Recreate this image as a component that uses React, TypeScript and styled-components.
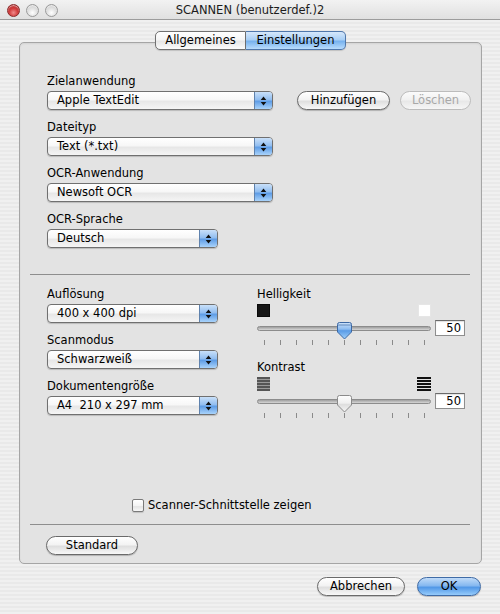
import React from "react";
import styled, { createGlobalStyle } from "styled-components";

const GlobalStyle = createGlobalStyle`
  html, body { margin: 0; padding: 0; }
  body {
    font-family: "DejaVu Sans", "Liberation Sans", sans-serif;
    font-size: 11.5px;
    color: #000;
  }
  * { box-sizing: border-box; }
`;

const Window = styled.div`
  width: 500px;
  height: 614px;
  overflow: hidden;
  display: flex;
  flex-direction: column;
  background: repeating-linear-gradient(
    to bottom,
    #f0f0f0 0px,
    #f0f0f0 2px,
    #e9e9e9 2px,
    #e9e9e9 4px
  );
`;

const TitleBar = styled.div`
  height: 20px;
  display: grid;
  grid-template-columns: 1fr auto 1fr;
  align-items: center;
  border-bottom: 1px solid #9c9c9c;
  background: linear-gradient(#f2f2f2, #e0e0e0);
`;

const Lights = styled.div`
  display: flex;
  gap: 6px;
  padding-left: 7px;
  padding-top: 2px;
`;

const Light = styled.span<{ $red?: boolean }>`
  width: 13px;
  height: 13px;
  border-radius: 50%;
  border: 1px solid ${(p) => (p.$red ? "#8a2a2a" : "#9a9a9a")};
  background: ${(p) =>
    p.$red
      ? "radial-gradient(circle at 50% 70%, #f08a8a 0%, #d23c3c 45%, #a52222 100%)"
      : "radial-gradient(circle at 50% 70%, #ffffff 0%, #e2e2e2 45%, #c4c4c4 100%)"};
  box-shadow: inset 0 1px 1px rgba(255, 255, 255, 0.6);
`;

const Title = styled.div`
  font-size: 11.5px;
  color: #1c1c1c;
  padding-top: 1px;
  white-space: nowrap;
`;

const Content = styled.div`
  display: flex;
  flex-direction: column;
  padding: 11px 18px 0 19px;
`;

const TabRow = styled.div`
  position: relative;
  z-index: 1;
  display: flex;
  justify-content: center;
  height: 19px;
`;

const Tab = styled.div<{ $active?: boolean; $first?: boolean; $w: number }>`
  width: ${(p) => p.$w}px;
  height: 19px;
  line-height: 17px;
  text-align: center;
  border: 1px solid ${(p) => (p.$active ? "#4f77ab" : "#707070")};
  border-left-width: ${(p) => (p.$first ? "1px" : "0")};
  border-radius: ${(p) => (p.$first ? "5px 0 0 5px" : "0 5px 5px 0")};
  background: ${(p) =>
    p.$active
      ? "linear-gradient(#d6e8fb 0%, #a9cff5 45%, #78b2ee 55%, #b9dcfd 100%)"
      : "linear-gradient(#ffffff 0%, #f5f5f5 45%, #e6e6e6 55%, #fbfbfb 100%)"};
  box-shadow: 0 1px 1px rgba(0, 0, 0, 0.15);
`;

const Panel = styled.div`
  margin-top: -8px;
  height: 522px;
  border: 1px solid #a5a5a5;
  border-radius: 5px;
  background: #e3e3e3;
  box-shadow: inset 0 1px 2px rgba(0, 0, 0, 0.07);
  padding: 31px 0 8px 0;
  display: flex;
  flex-direction: column;
`;

const FieldStack = styled.div`
  display: flex;
  flex-direction: column;
  gap: 10px;
`;

const SectionA = styled(FieldStack)`
  padding-left: 27px;
`;

const Field = styled.div`
  display: flex;
  flex-direction: column;
`;

const Label = styled.div`
  height: 15px;
  line-height: 15px;
  margin-bottom: 2px;
  white-space: nowrap;
`;

const FieldRow = styled.div`
  display: flex;
  align-items: flex-end;
`;

const ButtonGroup = styled.div`
  display: flex;
  gap: 10px;
  margin-left: 24px;
`;

const PopupBox = styled.div<{ $w: number }>`
  width: ${(p) => p.$w}px;
  height: 19px;
  display: flex;
  border: 1px solid #707070;
  border-radius: 4px;
  overflow: hidden;
  background: linear-gradient(#ffffff 0%, #f7f7f7 45%, #e7e7e7 55%, #f5f5f5 100%);
  box-shadow: 0 1px 1px rgba(0, 0, 0, 0.18);
`;

const PopupText = styled.span`
  flex: 1;
  padding-left: 9px;
  line-height: 17px;
  white-space: pre;
`;

const PopupArrows = styled.span`
  width: 18px;
  display: flex;
  align-items: center;
  justify-content: center;
  border-left: 1px solid #5f82ad;
  background: linear-gradient(#c9e0f9 0%, #92bef0 45%, #5f9de6 55%, #a9d3fb 100%);
`;

const PushButton = styled.div<{ $w: number; $disabled?: boolean; $blue?: boolean }>`
  width: ${(p) => p.$w}px;
  height: 19px;
  line-height: 17px;
  text-align: center;
  white-space: nowrap;
  border-radius: 10px;
  border: 1px solid
    ${(p) => (p.$disabled ? "#bcbcbc" : p.$blue ? "#3f6ba6" : "#6a6a6a")};
  color: ${(p) => (p.$disabled ? "#a8a8a8" : "#000")};
  background: ${(p) =>
    p.$blue
      ? "linear-gradient(#c0dbf8 0%, #86b8f0 45%, #5298e7 55%, #95cbfb 100%)"
      : p.$disabled
      ? "linear-gradient(#fbfbfb 0%, #f1f1f1 45%, #e8e8e8 55%, #f6f6f6 100%)"
      : "linear-gradient(#ffffff 0%, #f3f3f3 45%, #dfdfdf 55%, #f8f8f8 100%)"};
  box-shadow: ${(p) => (p.$disabled ? "none" : "0 1px 1px rgba(0, 0, 0, 0.22)")};
`;

const Separator = styled.div<{ $top: number }>`
  height: 1px;
  margin: ${(p) => p.$top}px 11px 0 10px;
  background: #8e8e8e;
`;

const SectionB = styled.div`
  display: flex;
  gap: 39px;
  padding-left: 27px;
  margin-top: 12px;
`;

const SliderColumn = styled.div`
  display: flex;
  flex-direction: column;
  gap: 15px;
`;

const SliderGroup = styled.div`
  display: flex;
  flex-direction: column;
`;

const IconRow = styled.div`
  width: 174px;
  height: 14px;
  display: flex;
  justify-content: space-between;
  align-items: flex-start;
`;

const Square = styled.span<{ $dark?: boolean }>`
  width: 13px;
  height: 13px;
  background: ${(p) => (p.$dark ? "#161616" : "#ffffff")};
  border: 1px solid ${(p) => (p.$dark ? "#0a0a0a" : "#e6e6e6")};
`;

const SliderRow = styled.div`
  display: flex;
  align-items: center;
  height: 16px;
  margin-top: 2px;
`;

const Track = styled.div`
  position: relative;
  width: 174px;
  height: 5px;
  border-radius: 3px;
  border: 1px solid #8c8c8c;
  background: linear-gradient(#9e9e9e, #d6d6d6);
`;

const ThumbSvg = styled.svg<{ $left: number }>`
  position: absolute;
  top: -5px;
  left: ${(p) => p.$left}px;
`;

const ValueBox = styled.div`
  margin-left: 4px;
  width: 30px;
  height: 16px;
  line-height: 14px;
  text-align: right;
  padding-right: 3px;
  background: #fff;
  border: 1px solid #8e8e8e;
  border-top-color: #6a6a6a;
  box-shadow: inset 0 1px 1px rgba(0, 0, 0, 0.12);
`;

const Ticks = styled.div`
  width: 174px;
  height: 5px;
  margin-top: 4px;
  display: flex;
  justify-content: space-between;
  padding: 0 6px 0 7px;
`;

const Tick = styled.span`
  width: 1px;
  height: 5px;
  background: #8a8a8a;
`;

const CheckRow = styled.div`
  margin-top: auto;
  height: 14px;
  display: flex;
  align-items: center;
  padding-left: 112px;
`;

const CheckBox = styled.span`
  width: 12px;
  height: 13px;
  margin-right: 4px;
  border: 1px solid #7a7a7a;
  border-radius: 2px;
  background: linear-gradient(#ffffff 0%, #f4f4f4 50%, #e4e4e4 60%, #f8f8f8 100%);
  box-shadow: 0 1px 1px rgba(0, 0, 0, 0.15);
`;

const StandardRow = styled.div`
  margin-top: 11px;
  padding-left: 26px;
  display: flex;
`;

const Footer = styled.div`
  display: flex;
  justify-content: flex-end;
  gap: 12px;
  margin-top: 13px;
  padding-right: 1px;
`;

const Arrows = () => (
  <svg width="7" height="10" viewBox="0 0 7 10">
    <path d="M3.5 0.5 L6.3 4 H0.7 Z M0.7 6 H6.3 L3.5 9.5 Z" fill="#111" />
  </svg>
);

const Popup = ({ text, w }: { text: string; w: number }) => (
  <PopupBox $w={w}>
    <PopupText>{text}</PopupText>
    <PopupArrows>
      <Arrows />
    </PopupArrows>
  </PopupBox>
);

const Thumb = ({ value, active, id }: { value: number; active: boolean; id: string }) => {
  const left = 7 + (value / 100) * 160 - 7.5 - 1;
  return (
    <ThumbSvg $left={left} width="15" height="18" viewBox="0 0 15 18">
      <defs>
        <linearGradient id={id} x1="0" y1="0" x2="0" y2="1">
          {active ? (
            <>
              <stop offset="0" stopColor="#cfe3fa" />
              <stop offset="0.4" stopColor="#8dbcf0" />
              <stop offset="0.5" stopColor="#5a9be6" />
              <stop offset="1" stopColor="#9fd0fb" />
            </>
          ) : (
            <>
              <stop offset="0" stopColor="#fdfdfd" />
              <stop offset="0.45" stopColor="#f0f0f0" />
              <stop offset="0.55" stopColor="#dedede" />
              <stop offset="1" stopColor="#f6f6f6" />
            </>
          )}
        </linearGradient>
      </defs>
      <path
        d="M2.5 0.5 H12.5 Q14.5 0.5 14.5 2.5 V10 L7.5 17 L0.5 10 V2.5 Q0.5 0.5 2.5 0.5 Z"
        fill={`url(#${id})`}
        stroke={active ? "#3d68a3" : "#8a8a8a"}
        strokeWidth="1"
      />
      {active && <path d="M1 3 H14" stroke="#2f5a94" strokeWidth="1" opacity="0.6" />}
    </ThumbSvg>
  );
};

const GrayStripes = () => (
  <svg width="13" height="14" viewBox="0 0 13 14">
    <rect x="0" y="0" width="13" height="14" fill="#9a9a9a" />
    {[0, 3, 6, 9, 12].map((y) => (
      <rect key={y} x="0" y={y} width="13" height="2" fill="#555" />
    ))}
  </svg>
);

const BlackStripes = () => (
  <svg width="14" height="14" viewBox="0 0 14 14">
    {[0, 3, 6, 9, 12].map((y) => (
      <rect key={y} x="0" y={y} width="14" height="2" fill="#111" />
    ))}
  </svg>
);

const TickMarks = () => (
  <Ticks>
    {Array.from({ length: 11 }).map((_, i) => (
      <Tick key={i} />
    ))}
  </Ticks>
);

const Slider = ({
  label,
  value,
  active,
  id,
  left,
  right,
}: {
  label: string;
  value: number;
  active: boolean;
  id: string;
  left: React.ReactNode;
  right: React.ReactNode;
}) => (
  <SliderGroup>
    <Label>{label}</Label>
    <IconRow>
      {left}
      {right}
    </IconRow>
    <SliderRow>
      <Track>
        <Thumb value={value} active={active} id={id} />
      </Track>
      <ValueBox>{value}</ValueBox>
    </SliderRow>
    <TickMarks />
  </SliderGroup>
);

const upperFields = [
  { label: "Dateityp", value: "Text (*.txt)", w: 226 },
  { label: "OCR-Anwendung", value: "Newsoft OCR", w: 226 },
  { label: "OCR-Sprache", value: "Deutsch", w: 171 },
];

const lowerFields = [
  { label: "Auflösung", value: "400 x 400 dpi" },
  { label: "Scanmodus", value: "Schwarzweiß" },
  { label: "Dokumentengröße", value: "A4  210 x 297 mm" },
];

export default function App() {
  return (
    <>
      <GlobalStyle />
      <Window>
        <TitleBar>
          <Lights>
            <Light $red />
            <Light />
            <Light />
          </Lights>
          <Title>SCANNEN (benutzerdef.)2</Title>
          <span />
        </TitleBar>
        <Content>
          <TabRow>
            <Tab $first $w={91}>
              Allgemeines
            </Tab>
            <Tab $active $w={100}>
              Einstellungen
            </Tab>
          </TabRow>
          <Panel>
            <SectionA>
              <FieldRow>
                <Field>
                  <Label>Zielanwendung</Label>
                  <Popup text="Apple TextEdit" w={226} />
                </Field>
                <ButtonGroup>
                  <PushButton $w={93}>Hinzufügen</PushButton>
                  <PushButton $w={71} $disabled>
                    Löschen
                  </PushButton>
                </ButtonGroup>
              </FieldRow>
              {upperFields.map((f) => (
                <Field key={f.label}>
                  <Label>{f.label}</Label>
                  <Popup text={f.value} w={f.w} />
                </Field>
              ))}
            </SectionA>
            <Separator $top={26} />
            <SectionB>
              <FieldStack>
                {lowerFields.map((f) => (
                  <Field key={f.label}>
                    <Label>{f.label}</Label>
                    <Popup text={f.value} w={171} />
                  </Field>
                ))}
              </FieldStack>
              <SliderColumn>
                <Slider
                  label="Helligkeit"
                  value={50}
                  active
                  id="thumbA"
                  left={<Square $dark />}
                  right={<Square />}
                />
                <Slider
                  label="Kontrast"
                  value={50}
                  active={false}
                  id="thumbB"
                  left={<GrayStripes />}
                  right={<BlackStripes />}
                />
              </SliderColumn>
            </SectionB>
            <CheckRow>
              <CheckBox />
              Scanner-Schnittstelle zeigen
            </CheckRow>
            <Separator $top={12} />
            <StandardRow>
              <PushButton $w={92}>Standard</PushButton>
            </StandardRow>
          </Panel>
          <Footer>
            <PushButton $w={88}>Abbrechen</PushButton>
            <PushButton $w={64} $blue>
              OK
            </PushButton>
          </Footer>
        </Content>
      </Window>
    </>
  );
}
